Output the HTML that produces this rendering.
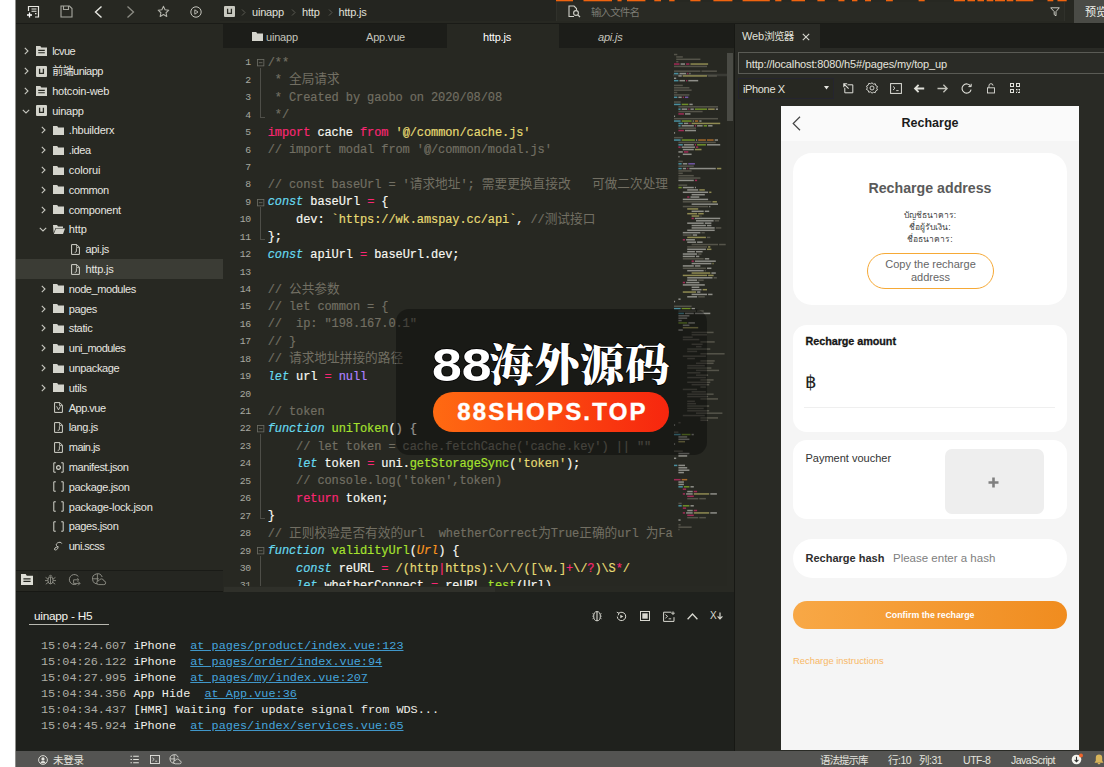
<!DOCTYPE html>
<html lang="zh">
<head>
<meta charset="utf-8">
<title>HBuilderX - uinapp/http/http.js</title>
<style>
*{box-sizing:border-box;margin:0;padding:0}
html,body{width:1104px;height:767px;overflow:hidden;background:#fff}
body{position:relative;font-family:"Liberation Sans","Noto Sans CJK SC",sans-serif;color:#e8e8e2;font-size:11px}
.a{position:absolute}
svg{position:absolute;overflow:visible}
#app{position:absolute;left:0;top:0;width:1104px;height:767px;overflow:hidden}
#bg{left:15px;top:0;width:1089px;height:767px;background:#272822}
#toolbar{left:15px;top:0;width:1089px;height:24px;background:#272822;border-bottom:1px solid #1a1b17}
.ui{font-family:"Liberation Sans","Noto Sans CJK SC",sans-serif;font-size:11px;letter-spacing:-0.2px;white-space:nowrap;line-height:14px}
.row{position:absolute;left:15px;width:208px;height:20px}
.row .t{position:absolute;top:3px;color:#e6e6e0}
#tabbar{left:223px;top:24px;width:511px;height:24px;background:#1c1d19}
#editor{left:223px;top:48px;width:511px;height:539px;background:#272822;overflow:hidden}
.ln{position:absolute;left:0;width:28px;text-align:right;font-family:"Liberation Mono",monospace;font-size:9.8px;color:#a8a8a0;line-height:17.5px;height:17.5px;letter-spacing:-0.2px}
.cl{position:absolute;left:44.7px;font-family:"Liberation Mono","Noto Sans CJK SC",monospace;font-size:12px;letter-spacing:-0.1px;line-height:17.5px;height:17.5px;white-space:pre;color:#f8f8f2;-webkit-text-stroke-width:0.180px}
.cl i{font-style:italic}
.c{color:#726f63}.k{color:#f92672}.s{color:#e6db74}.d{color:#66d9ef;font-style:italic}.f{color:#a6e22e}.p{color:#fd971f;font-style:italic}.n{color:#ae81ff}
.z{font-size:12.7px;letter-spacing:0;line-height:0;-webkit-text-stroke-width:0;font-family:"Noto Sans CJK SC",sans-serif}
#console{left:15px;top:592px;width:719px;height:159px;background:#1f211d}
.log{position:absolute;left:41px;font-family:"Liberation Mono",monospace;font-size:11.85px;line-height:16px;height:16px;white-space:pre;color:#f0f0ea;transform:scaleY(0.900);transform-origin:0 12px}
.log .g{color:#aeaea6}.log u{color:#45a5dd;text-decoration:underline}
#web{left:734px;top:24px;width:370px;height:727px;background:#292a25}
#status{left:15px;top:751px;width:1089px;height:16px;background:#545452}
#status .ui{color:#e4e4de;position:absolute;top:2px}
#phone{left:781px;top:106px;width:298px;height:644px;background:#f5f5f5;overflow:hidden;font-family:"Liberation Sans",sans-serif;color:#333}
.card{position:absolute;left:12px;width:274px;background:#fff}
</style>
</head>
<body>
<div id="app">
<div class="a" id="bg"></div>
<div class="a" id="toolbar"></div>
<svg style="left:0;top:0" width="1104" height="3" viewBox="0 0 1104 3"><rect x="506" y="0" width="28.0" height="1.300" fill="#f0640f"/><rect x="545" y="0" width="28.0" height="1.300" fill="#f0640f"/><rect x="583.5" y="0" width="28.5" height="1.300" fill="#f0640f"/><rect x="617.5" y="0" width="4.1" height="1.300" fill="#f0640f"/><rect x="627" y="0" width="18.4" height="1.300" fill="#f0640f"/><rect x="654.3" y="0" width="6.7" height="1.300" fill="#f0640f"/><rect x="669.2" y="0" width="5.4" height="1.300" fill="#f0640f"/><rect x="690.3" y="0" width="10.2" height="1.300" fill="#f0640f"/><rect x="713.4" y="0" width="19.0" height="1.300" fill="#f0640f"/><rect x="742.6" y="0" width="27.2" height="1.300" fill="#f0640f"/><rect x="775.2" y="0" width="6.2" height="1.300" fill="#f0640f"/><rect x="791.5" y="0" width="13.5" height="1.300" fill="#f0640f"/><rect x="817.4" y="0" width="7.4" height="1.300" fill="#f0640f"/><rect x="838.4" y="0" width="6.1" height="1.300" fill="#f0640f"/><rect x="852" y="0" width="5.4" height="1.300" fill="#f0640f"/><rect x="865" y="0" width="6.0" height="1.300" fill="#f0640f"/><rect x="886" y="0" width="6.8" height="1.300" fill="#f0640f"/><rect x="918.6" y="0" width="6.1" height="1.300" fill="#f0640f"/><rect x="954" y="0" width="11.0" height="1.300" fill="#f0640f"/><rect x="967.5" y="0" width="7.5" height="1.300" fill="#f0640f"/><rect x="977.5" y="0" width="6.5" height="1.300" fill="#f0640f"/><rect x="986.7" y="0" width="6.6" height="1.300" fill="#f0640f"/><rect x="995" y="0" width="10.0" height="1.300" fill="#f0640f"/><rect x="1006.7" y="0" width="6.6" height="1.300" fill="#f0640f"/><rect x="1015.8" y="0" width="17.5" height="1.300" fill="#f0640f"/><rect x="1047.5" y="0" width="5.8" height="1.300" fill="#f0640f"/><rect x="1057.5" y="0" width="9.2" height="1.300" fill="#f0640f"/><rect x="1092.5" y="0" width="7.5" height="1.300" fill="#f0640f"/></svg>
<svg style="left:26px;top:5px" width="14" height="14" viewBox="0 0 14 14"><path d="M2.5 6V1.5h10v10.5H9" stroke="#e8e8e2" stroke-width="1.2" fill="none"/><path d="M5.5 4h5M5.5 6.3h5M9 8.6h1.5" stroke="#e8e8e2" stroke-width="1.1"/><path d="M1 10h5M3.5 7.5v5" stroke="#fff" stroke-width="1.3"/></svg>
<svg style="left:60px;top:5px" width="13" height="13" viewBox="0 0 13 13"><path d="M1 1h8.5L12 3.5V12H1z" stroke="#a8a8a0" stroke-width="1.1" fill="none"/><path d="M3.5 1v3.5h5V1" stroke="#a8a8a0" stroke-width="1.1" fill="none"/></svg>
<svg style="left:94px;top:6px" width="9" height="12" viewBox="0 0 9 12"><path d="M7.5 0.5L1.5 6l6 5.5" stroke="#e8e8e2" stroke-width="1.4" fill="none"/></svg>
<svg style="left:126px;top:6px" width="9" height="12" viewBox="0 0 9 12"><path d="M1.5 0.5L7.5 6l-6 5.5" stroke="#8c8c84" stroke-width="1.3" fill="none"/></svg>
<svg style="left:157px;top:5px" width="13" height="13" viewBox="0 0 24 24"><path d="M12 2.5l2.9 6.3 6.8.8-5 4.7 1.3 6.8L12 17.7 5.9 21.1l1.3-6.8-5-4.7 6.8-.8z" stroke="#b4b4ac" stroke-width="2" fill="none" stroke-linejoin="round"/></svg>
<svg style="left:190px;top:6px" width="12" height="12" viewBox="0 0 12 12"><circle cx="6" cy="6" r="5.2" stroke="#c4c4bc" stroke-width="1" fill="none"/><path d="M4.8 3.8L8 6 4.8 8.2z" stroke="#c4c4bc" stroke-width="0.9" fill="none"/></svg>
<div class="a" style="left:220px;top:0;width:336px;height:21px;background:#242520"></div>
<svg style="left:224px;top:6px" width="11" height="11" viewBox="0 0 11 11"><rect x="0" y="0" width="11" height="11" rx="1" fill="#c8c8c0"/><path d="M3.6 2.8v4.6h3.8V2.8" stroke="#272822" stroke-width="1.3" fill="none"/></svg>
<svg style="left:241px;top:9px" width="5" height="7" viewBox="0 0 5 7"><path d="M1 0.5l3 3-3 3" stroke="#5a5a52" stroke-width="1" fill="none"/></svg>
<svg style="left:291px;top:9px" width="5" height="7" viewBox="0 0 5 7"><path d="M1 0.5l3 3-3 3" stroke="#5a5a52" stroke-width="1" fill="none"/></svg>
<svg style="left:328px;top:9px" width="5" height="7" viewBox="0 0 5 7"><path d="M1 0.5l3 3-3 3" stroke="#5a5a52" stroke-width="1" fill="none"/></svg>
<div class="a ui" style="left:252px;top:5px;color:#e0e0da">uinapp</div>
<div class="a ui" style="left:302px;top:5px;color:#e0e0da">http</div>
<div class="a ui" style="left:338.5px;top:5px;color:#e0e0da">http.js</div>
<div class="a" style="left:556px;top:2px;width:509px;height:19px;background:#292a24;border-left:1px solid #30312b;border-right:1px solid #30312b"></div>
<svg style="left:568px;top:5px" width="13" height="13" viewBox="0 0 13 13"><path d="M6 11.5H1V1h5l2.5 2.5V5" stroke="#d0d0c8" stroke-width="1.1" fill="none"/><circle cx="8" cy="8" r="2.4" stroke="#d0d0c8" stroke-width="1.1" fill="none"/><path d="M9.8 9.8l2.2 2.2" stroke="#d0d0c8" stroke-width="1.2"/></svg>
<div class="a ui" style="left:591px;top:5px;color:#7c7c74;font-size:10.5px;letter-spacing:-0.900px">输入文件名</div>
<svg style="left:1050px;top:7px" width="10" height="10" viewBox="0 0 10 10"><path d="M0.7 0.8h8.6L6 4.6v4.2L4.2 7.6V4.6z" stroke="#c8c8c0" stroke-width="1" fill="none" stroke-linejoin="round"/></svg>
<div class="a" style="left:1074px;top:0;width:30px;height:23px;background:#4a4b46"></div>
<div class="a ui" style="left:1085px;top:5px;color:#f0f0ea;font-size:11px;letter-spacing:0">预览</div>
<div class="row" style="top:41.2px"><svg style="left:8.5px;top:6px" width="5" height="8" viewBox="0 0 5 8"><path d="M0.8 0.8L4 4 0.8 7.2" stroke="#c8c8c0" stroke-width="1.1" fill="none"/></svg><svg style="left:21px;top:5px" width="11" height="10" viewBox="0 0 11 10"><path d="M0 0h4.3l1 1.6H11V10H0z" fill="#d4d4cc"/><path d="M2.2 4.4h6.6M2.2 6.8h6.6" stroke="#272822" stroke-width="1.1"/></svg><span class="t ui" style="left:37.2px;letter-spacing:-0.537px">lcvue</span></div>
<div class="row" style="top:61.0px"><svg style="left:8.5px;top:6px" width="5" height="8" viewBox="0 0 5 8"><path d="M0.8 0.8L4 4 0.8 7.2" stroke="#c8c8c0" stroke-width="1.1" fill="none"/></svg><svg style="left:21px;top:4.5px" width="11" height="11" viewBox="0 0 11 11"><rect width="11" height="11" rx="1" fill="#d4d4cc"/><path d="M3.6 2.8v4.6h3.8V2.8" stroke="#272822" stroke-width="1.3" fill="none"/></svg><span class="t ui" style="left:37.2px;letter-spacing:-0.55px">前端uniapp</span></div>
<div class="row" style="top:80.8px"><svg style="left:8.5px;top:6px" width="5" height="8" viewBox="0 0 5 8"><path d="M0.8 0.8L4 4 0.8 7.2" stroke="#c8c8c0" stroke-width="1.1" fill="none"/></svg><svg style="left:21px;top:5px" width="11" height="10" viewBox="0 0 11 10"><path d="M0 0h4.3l1 1.6H11V10H0z" fill="#d4d4cc"/><path d="M2.2 4.4h6.6M2.2 6.8h6.6" stroke="#272822" stroke-width="1.1"/></svg><span class="t ui" style="left:37.2px;letter-spacing:-0.212px">hotcoin-web</span></div>
<div class="row" style="top:100.6px"><svg style="left:7.0px;top:8px" width="8" height="5" viewBox="0 0 8 5"><path d="M0.8 0.8L4 4 7.2 0.8" stroke="#c8c8c0" stroke-width="1.1" fill="none"/></svg><svg style="left:21px;top:4.5px" width="11" height="11" viewBox="0 0 11 11"><rect width="11" height="11" rx="1" fill="#d4d4cc"/><path d="M3.6 2.8v4.6h3.8V2.8" stroke="#272822" stroke-width="1.3" fill="none"/></svg><span class="t ui" style="left:37.2px;letter-spacing:-0.258px">uinapp</span></div>
<div class="row" style="top:120.4px"><svg style="left:25.5px;top:6px" width="5" height="8" viewBox="0 0 5 8"><path d="M0.8 0.8L4 4 0.8 7.2" stroke="#c8c8c0" stroke-width="1.1" fill="none"/></svg><svg style="left:38px;top:5.5px" width="11" height="9" viewBox="0 0 11 9"><path d="M0 0h4.2l1 1.5H11V9H0z" fill="#d4d4cc"/></svg><span class="t ui" style="left:53.8px;letter-spacing:-0.22px">.hbuilderx</span></div>
<div class="row" style="top:140.2px"><svg style="left:25.5px;top:6px" width="5" height="8" viewBox="0 0 5 8"><path d="M0.8 0.8L4 4 0.8 7.2" stroke="#c8c8c0" stroke-width="1.1" fill="none"/></svg><svg style="left:38px;top:5.5px" width="11" height="9" viewBox="0 0 11 9"><path d="M0 0h4.2l1 1.5H11V9H0z" fill="#d4d4cc"/></svg><span class="t ui" style="left:53.8px;letter-spacing:-0.372px">.idea</span></div>
<div class="row" style="top:160.0px"><svg style="left:25.5px;top:6px" width="5" height="8" viewBox="0 0 5 8"><path d="M0.8 0.8L4 4 0.8 7.2" stroke="#c8c8c0" stroke-width="1.1" fill="none"/></svg><svg style="left:38px;top:5.5px" width="11" height="9" viewBox="0 0 11 9"><path d="M0 0h4.2l1 1.5H11V9H0z" fill="#d4d4cc"/></svg><span class="t ui" style="left:53.8px;letter-spacing:-0.129px">colorui</span></div>
<div class="row" style="top:179.8px"><svg style="left:25.5px;top:6px" width="5" height="8" viewBox="0 0 5 8"><path d="M0.8 0.8L4 4 0.8 7.2" stroke="#c8c8c0" stroke-width="1.1" fill="none"/></svg><svg style="left:38px;top:5.5px" width="11" height="9" viewBox="0 0 11 9"><path d="M0 0h4.2l1 1.5H11V9H0z" fill="#d4d4cc"/></svg><span class="t ui" style="left:53.8px;letter-spacing:-0.365px">common</span></div>
<div class="row" style="top:199.6px"><svg style="left:25.5px;top:6px" width="5" height="8" viewBox="0 0 5 8"><path d="M0.8 0.8L4 4 0.8 7.2" stroke="#c8c8c0" stroke-width="1.1" fill="none"/></svg><svg style="left:38px;top:5.5px" width="11" height="9" viewBox="0 0 11 9"><path d="M0 0h4.2l1 1.5H11V9H0z" fill="#d4d4cc"/></svg><span class="t ui" style="left:53.8px;letter-spacing:-0.271px">component</span></div>
<div class="row" style="top:219.4px"><svg style="left:24.0px;top:8px" width="8" height="5" viewBox="0 0 8 5"><path d="M0.8 0.8L4 4 7.2 0.8" stroke="#c8c8c0" stroke-width="1.1" fill="none"/></svg><svg style="left:38px;top:5.5px" width="12" height="9" viewBox="0 0 12 9"><path d="M0 0h4l1 1.5h5V3H2.6L0.6 8z" fill="#d4d4cc"/><path d="M3 3.6h9L10 9H0.8z" fill="#d4d4cc"/></svg><span class="t ui" style="left:53.8px;letter-spacing:-0.1px">http</span></div>
<div class="row" style="top:239.2px"><svg style="left:55.5px;top:4.5px" width="9" height="11" viewBox="0 0 9 11"><path d="M0.6 0.6h5.2l2.6 2.6v7.2H0.6z" stroke="#d4d4cc" stroke-width="1" fill="none"/><path d="M5.6 0.8v2.8h2.6" stroke="#d4d4cc" stroke-width="0.8" fill="none"/><path d="M5.4 4.2v3q0 1.1-1.1 1.1h-.6" stroke="#d4d4cc" stroke-width="0.9" fill="none"/></svg><span class="t ui" style="left:70.5px;letter-spacing:-0.365px">api.js</span></div>
<div class="row" style="top:259.0px;background:#3b3c35"><svg style="left:55.5px;top:4.5px" width="9" height="11" viewBox="0 0 9 11"><path d="M0.6 0.6h5.2l2.6 2.6v7.2H0.6z" stroke="#d4d4cc" stroke-width="1" fill="none"/><path d="M5.6 0.8v2.8h2.6" stroke="#d4d4cc" stroke-width="0.8" fill="none"/><path d="M5.4 4.2v3q0 1.1-1.1 1.1h-.6" stroke="#d4d4cc" stroke-width="0.9" fill="none"/></svg><span class="t ui" style="left:70.5px;letter-spacing:-0.194px">http.js</span></div>
<div class="row" style="top:278.8px"><svg style="left:25.5px;top:6px" width="5" height="8" viewBox="0 0 5 8"><path d="M0.8 0.8L4 4 0.8 7.2" stroke="#c8c8c0" stroke-width="1.1" fill="none"/></svg><svg style="left:38px;top:5.5px" width="11" height="9" viewBox="0 0 11 9"><path d="M0 0h4.2l1 1.5H11V9H0z" fill="#d4d4cc"/></svg><span class="t ui" style="left:53.8px;letter-spacing:-0.431px">node_modules</span></div>
<div class="row" style="top:298.6px"><svg style="left:25.5px;top:6px" width="5" height="8" viewBox="0 0 5 8"><path d="M0.8 0.8L4 4 0.8 7.2" stroke="#c8c8c0" stroke-width="1.1" fill="none"/></svg><svg style="left:38px;top:5.5px" width="11" height="9" viewBox="0 0 11 9"><path d="M0 0h4.2l1 1.5H11V9H0z" fill="#d4d4cc"/></svg><span class="t ui" style="left:53.8px;letter-spacing:-0.397px">pages</span></div>
<div class="row" style="top:318.4px"><svg style="left:25.5px;top:6px" width="5" height="8" viewBox="0 0 5 8"><path d="M0.8 0.8L4 4 0.8 7.2" stroke="#c8c8c0" stroke-width="1.1" fill="none"/></svg><svg style="left:38px;top:5.5px" width="11" height="9" viewBox="0 0 11 9"><path d="M0 0h4.2l1 1.5H11V9H0z" fill="#d4d4cc"/></svg><span class="t ui" style="left:53.8px;letter-spacing:-0.365px">static</span></div>
<div class="row" style="top:338.2px"><svg style="left:25.5px;top:6px" width="5" height="8" viewBox="0 0 5 8"><path d="M0.8 0.8L4 4 0.8 7.2" stroke="#c8c8c0" stroke-width="1.1" fill="none"/></svg><svg style="left:38px;top:5.5px" width="11" height="9" viewBox="0 0 11 9"><path d="M0 0h4.2l1 1.5H11V9H0z" fill="#d4d4cc"/></svg><span class="t ui" style="left:53.8px;letter-spacing:-0.534px">uni_modules</span></div>
<div class="row" style="top:358.0px"><svg style="left:25.5px;top:6px" width="5" height="8" viewBox="0 0 5 8"><path d="M0.8 0.8L4 4 0.8 7.2" stroke="#c8c8c0" stroke-width="1.1" fill="none"/></svg><svg style="left:38px;top:5.5px" width="11" height="9" viewBox="0 0 11 9"><path d="M0 0h4.2l1 1.5H11V9H0z" fill="#d4d4cc"/></svg><span class="t ui" style="left:53.8px;letter-spacing:-0.37px">unpackage</span></div>
<div class="row" style="top:377.8px"><svg style="left:25.5px;top:6px" width="5" height="8" viewBox="0 0 5 8"><path d="M0.8 0.8L4 4 0.8 7.2" stroke="#c8c8c0" stroke-width="1.1" fill="none"/></svg><svg style="left:38px;top:5.5px" width="11" height="9" viewBox="0 0 11 9"><path d="M0 0h4.2l1 1.5H11V9H0z" fill="#d4d4cc"/></svg><span class="t ui" style="left:53.8px;letter-spacing:-0.352px">utils</span></div>
<div class="row" style="top:397.6px"><svg style="left:38.5px;top:4.5px" width="9" height="11" viewBox="0 0 9 11"><path d="M0.6 0.6h5.2l2.6 2.6v7.2H0.6z" stroke="#d4d4cc" stroke-width="1" fill="none"/><path d="M5.6 0.8v2.8h2.6" stroke="#d4d4cc" stroke-width="0.8" fill="none"/><path d="M2.6 4.3l1.9 3.6 1.9-3.6" stroke="#d4d4cc" stroke-width="0.9" fill="none"/></svg><span class="t ui" style="left:53.8px;letter-spacing:-0.525px">App.vue</span></div>
<div class="row" style="top:417.4px"><svg style="left:38.5px;top:4.5px" width="9" height="11" viewBox="0 0 9 11"><path d="M0.6 0.6h5.2l2.6 2.6v7.2H0.6z" stroke="#d4d4cc" stroke-width="1" fill="none"/><path d="M5.6 0.8v2.8h2.6" stroke="#d4d4cc" stroke-width="0.8" fill="none"/><path d="M5.4 4.2v3q0 1.1-1.1 1.1h-.6" stroke="#d4d4cc" stroke-width="0.9" fill="none"/></svg><span class="t ui" style="left:53.8px;letter-spacing:-0.4px">lang.js</span></div>
<div class="row" style="top:437.2px"><svg style="left:38.5px;top:4.5px" width="9" height="11" viewBox="0 0 9 11"><path d="M0.6 0.6h5.2l2.6 2.6v7.2H0.6z" stroke="#d4d4cc" stroke-width="1" fill="none"/><path d="M5.6 0.8v2.8h2.6" stroke="#d4d4cc" stroke-width="0.8" fill="none"/><path d="M5.4 4.2v3q0 1.1-1.1 1.1h-.6" stroke="#d4d4cc" stroke-width="0.9" fill="none"/></svg><span class="t ui" style="left:53.8px;letter-spacing:-0.549px">main.js</span></div>
<div class="row" style="top:457.0px"><svg style="left:37.7px;top:4.500px" width="11" height="11" viewBox="0 0 11 11"><path d="M2.800 0.800H0.800v9.400h2M8.200 0.800h2v9.400h-2" stroke="#d4d4cc" stroke-width="1" fill="none"/><circle cx="5.500" cy="5.500" r="1.900" stroke="#d4d4cc" stroke-width="1.200" fill="none"/></svg><span class="t ui" style="left:53.8px;letter-spacing:-0.393px">manifest.json</span></div>
<div class="row" style="top:476.8px"><svg style="left:37.7px;top:4.500px" width="11" height="11" viewBox="0 0 11 11"><path d="M2.800 0.800H0.800v9.400h2M8.200 0.800h2v9.400h-2" stroke="#d4d4cc" stroke-width="1" fill="none"/></svg><span class="t ui" style="left:53.8px;letter-spacing:-0.336px">package.json</span></div>
<div class="row" style="top:496.6px"><svg style="left:37.7px;top:4.500px" width="11" height="11" viewBox="0 0 11 11"><path d="M2.800 0.800H0.800v9.400h2M8.200 0.800h2v9.400h-2" stroke="#d4d4cc" stroke-width="1" fill="none"/></svg><span class="t ui" style="left:53.8px;letter-spacing:-0.251px">package-lock.json</span></div>
<div class="row" style="top:516.4px"><svg style="left:37.7px;top:4.500px" width="11" height="11" viewBox="0 0 11 11"><path d="M2.800 0.800H0.800v9.400h2M8.200 0.800h2v9.400h-2" stroke="#d4d4cc" stroke-width="1" fill="none"/></svg><span class="t ui" style="left:53.8px;letter-spacing:-0.362px">pages.json</span></div>
<div class="row" style="top:536.2px"><svg style="left:37.5px;top:4.5px" width="10" height="11" viewBox="0 0 10 11"><path d="M8.8 2.6C8.4 1 6 0.9 4.4 2 2.8 3.1 3 4.4 4.2 5.2 5.6 6.1 5.2 7.6 3.6 8.6 2.4 9.3 1.2 9 1.4 8 1.7 6.8 4 5.6 5.4 5.6" stroke="#d4d4cc" stroke-width="0.9" fill="none"/></svg><span class="t ui" style="left:53.8px;letter-spacing:-0.55px">uni.scss</span></div>
<div class="a" style="left:15px;top:570px;width:208px;height:22px;background:#252621;border-top:1px solid #1a1b17;border-bottom:1px solid #171814"></div>
<div class="a" style="left:15px;top:571px;width:23px;height:20px;background:#272822"></div>
<svg style="left:20.5px;top:573.5px" width="12" height="11" viewBox="0 0 11 10"><path d="M0 0h4.3l1 1.6H11V10H0z" fill="#deded6"/><path d="M2.2 4.4h6.6M2.2 6.8h6.6" stroke="#272822" stroke-width="1.1"/></svg>
<svg style="left:44px;top:573px" width="13" height="13" viewBox="0 0 13 13"><ellipse cx="6.5" cy="7.3" rx="2.6" ry="3.6" stroke="#8e8e86" stroke-width="1" fill="none"/><path d="M5 3.4a1.6 1.6 0 0 1 3 0M6.5 4v6.8M3.9 6L1.6 4.4M9.1 6l2.3-1.6M3.9 7.6H1M9.1 7.6H12M4.1 9.4l-2.3 1.8M8.9 9.4l2.3 1.8" stroke="#8e8e86" stroke-width="0.9" fill="none"/></svg>
<svg style="left:68px;top:573px" width="13" height="13" viewBox="0 0 13 13"><path d="M10.4 3.6A5 5 0 1 0 8.6 11" stroke="#8e8e86" stroke-width="1" fill="none"/><path d="M5.6 6.8h4.4M5.6 6.8v3.6h6.2M10 8.4l2 2-2 2M9.4 5.2l1.4 1.6-1.4 1.4" stroke="#8e8e86" stroke-width="0.9" fill="none"/></svg>
<svg style="left:92px;top:573px" width="14" height="13" viewBox="0 0 14 13"><path d="M6 10.8A5 5 0 1 1 10.2 4" stroke="#8e8e86" stroke-width="1" fill="none"/><path d="M5.4 1.2v9.2M0.8 5.8h6" stroke="#8e8e86" stroke-width="0.9" fill="none"/><path d="M6.6 11.6h5.2a1.8 1.8 0 0 0 .2-3.6 2.6 2.6 0 0 0-5-.4 2 2 0 0 0-.4 4z" stroke="#8e8e86" stroke-width="0.9" fill="#252621"/></svg>
<div class="a" id="tabbar"></div>
<div class="a" style="left:447px;top:24px;width:112px;height:24px;background:#272822"></div>
<svg style="left:252px;top:32px" width="11" height="9" viewBox="0 0 11 9"><path d="M0 0h4.2l1 1.5H11V9H0z" fill="#d4d4cc"/></svg>
<div class="a ui" style="left:266px;top:30px;color:#c4c4bc">uinapp</div>
<div class="a ui" style="left:366px;top:30px;color:#c4c4bc">App.vue</div>
<div class="a ui" style="left:483px;top:30px;color:#ffffff">http.js</div>
<div class="a ui" style="left:598px;top:30px;color:#c4c4bc;font-style:italic">api.js</div>
<div class="a" id="editor">
<div class="ln" style="top:6.36px">1</div>
<div class="cl" style="top:6.96px"><span class="c">/**</span></div>
<div class="ln" style="top:23.79px">2</div>
<div class="cl" style="top:24.39px"><span class="c"> * <span class="z">全局请求</span></span></div>
<div class="ln" style="top:41.23px">3</div>
<div class="cl" style="top:41.83px"><span class="c"> * Created by gaobo on 2020/08/08</span></div>
<div class="ln" style="top:58.66px">4</div>
<div class="cl" style="top:59.26px"><span class="c"> */</span></div>
<div class="ln" style="top:76.10px">5</div>
<div class="cl" style="top:76.7px"><span class="k">import</span> cache <span class="k">from</span> <span class="s">'@/common/cache.js'</span></div>
<div class="ln" style="top:93.53px">6</div>
<div class="cl" style="top:94.13px"><span class="c">// import modal from '@/common/modal.js'</span></div>
<div class="ln" style="top:110.96px">7</div>
<div class="ln" style="top:128.40px">8</div>
<div class="cl" style="top:129.0px"><span class="c">// const baseUrl = '<span class="z">请求地址</span>'; <span class="z">需要更换直接改</span>   <span class="z">可做二次处理</span></span></div>
<div class="ln" style="top:145.83px">9</div>
<div class="cl" style="top:146.43px"><span class="d">const</span> baseUrl <span class="k">=</span> {</div>
<div class="ln" style="top:163.27px">10</div>
<div class="cl" style="top:163.87px">    dev: <span class="s">`https://wk.amspay.cc/api`</span>, <span class="c">//<span class="z">测试接口</span></span></div>
<div class="ln" style="top:180.70px">11</div>
<div class="cl" style="top:181.3px">};</div>
<div class="ln" style="top:198.13px">12</div>
<div class="cl" style="top:198.73px"><span class="d">const</span> apiUrl <span class="k">=</span> baseUrl.dev;</div>
<div class="ln" style="top:215.57px">13</div>
<div class="ln" style="top:233.00px">14</div>
<div class="cl" style="top:233.6px"><span class="c">// <span class="z">公共参数</span></span></div>
<div class="ln" style="top:250.44px">15</div>
<div class="cl" style="top:251.04px"><span class="c">// let common = {</span></div>
<div class="ln" style="top:267.87px">16</div>
<div class="cl" style="top:268.47px"><span class="c">//  ip: "198.167.0.1"</span></div>
<div class="ln" style="top:285.30px">17</div>
<div class="cl" style="top:285.9px"><span class="c">// }</span></div>
<div class="ln" style="top:302.74px">18</div>
<div class="cl" style="top:303.34px"><span class="c">// <span class="z">请求地址拼接的路径</span></span></div>
<div class="ln" style="top:320.17px">19</div>
<div class="cl" style="top:320.77px"><span class="d">let</span> url <span class="k">=</span> <span class="n">null</span></div>
<div class="ln" style="top:337.61px">20</div>
<div class="ln" style="top:355.04px">21</div>
<div class="cl" style="top:355.64px"><span class="c">// token</span></div>
<div class="ln" style="top:372.47px">22</div>
<div class="cl" style="top:373.07px"><span class="d">function</span> <span class="f">uniToken</span>() {</div>
<div class="ln" style="top:389.91px">23</div>
<div class="cl" style="top:390.51px">    <span class="c">// let token = cache.fetchCache('cache.key') || ""</span></div>
<div class="ln" style="top:407.34px">24</div>
<div class="cl" style="top:407.94px">    <span class="d">let</span> token <span class="k">=</span> uni.<span class="f">getStorageSync</span>(<span class="s">'token'</span>);</div>
<div class="ln" style="top:424.78px">25</div>
<div class="cl" style="top:425.38px">    <span class="c">// console.log('token',token)</span></div>
<div class="ln" style="top:442.21px">26</div>
<div class="cl" style="top:442.81px">    <span class="k">return</span> token;</div>
<div class="ln" style="top:459.64px">27</div>
<div class="cl" style="top:460.24px">}</div>
<div class="ln" style="top:477.08px">28</div>
<div class="cl" style="top:477.68px"><span class="c">// <span class="z">正则校验是否有效的</span>url  whetherCorrect<span class="z">为</span>True<span class="z">正确的</span>url <span class="z">为</span>Fa,</span></div>
<div class="ln" style="top:494.51px">29</div>
<div class="cl" style="top:495.11px"><span class="d">function</span> <span class="f">validityUrl</span>(<span class="p">Url</span>) {</div>
<div class="ln" style="top:511.95px">30</div>
<div class="cl" style="top:512.55px">    <span class="d">const</span> reURL <span class="k">=</span> <span class="s">/(http</span><span class="k">|</span><span class="s">https):\/\/([\w.]</span><span class="k">+</span><span class="s">\/</span><span class="k">?</span><span class="s">)\S</span><span class="k">*</span><span class="s">/</span></div>
<div class="ln" style="top:529.38px">31</div>
<div class="cl" style="top:529.98px">    <span class="d">let</span> whetherConnect <span class="k">=</span> reURL.<span class="f">test</span>(Url)</div>
<div class="a" style="left:37px;top:19.7px;width:5px;height:50.3px;border-left:1px solid #4e4e48;border-bottom:1px solid #4e4e48"></div>
<div class="a" style="left:37px;top:159.2px;width:5px;height:32.9px;border-left:1px solid #4e4e48;border-bottom:1px solid #4e4e48"></div>
<div class="a" style="left:37px;top:385.8px;width:5px;height:85.2px;border-left:1px solid #4e4e48;border-bottom:1px solid #4e4e48"></div>
<div class="a" style="left:37px;top:507.9px;width:5px;height:50.3px;border-left:1px solid #4e4e48;border-bottom:1px solid #4e4e48"></div>
<svg style="left:33.800px;top:11.31px" width="7.400" height="7.400" viewBox="0 0 7 7"><rect x="0.5" y="0.5" width="6" height="6" stroke="#6c6c64" fill="#272822" stroke-width="0.8"/><path d="M1.8 3.5h3.4" stroke="#6c6c64" stroke-width="0.8"/></svg>
<svg style="left:33.800px;top:150.78px" width="7.400" height="7.400" viewBox="0 0 7 7"><rect x="0.5" y="0.5" width="6" height="6" stroke="#6c6c64" fill="#272822" stroke-width="0.8"/><path d="M1.8 3.5h3.4" stroke="#6c6c64" stroke-width="0.8"/></svg>
<svg style="left:33.800px;top:377.42px" width="7.400" height="7.400" viewBox="0 0 7 7"><rect x="0.5" y="0.5" width="6" height="6" stroke="#6c6c64" fill="#272822" stroke-width="0.8"/><path d="M1.8 3.5h3.4" stroke="#6c6c64" stroke-width="0.8"/></svg>
<svg style="left:33.800px;top:499.46px" width="7.400" height="7.400" viewBox="0 0 7 7"><rect x="0.5" y="0.5" width="6" height="6" stroke="#6c6c64" fill="#272822" stroke-width="0.8"/><path d="M1.8 3.5h3.4" stroke="#6c6c64" stroke-width="0.8"/></svg>
</div>
<div class="a" style="left:673px;top:49px;width:54px;height:538px;background:#272822"></div>
<div class="a" style="left:727px;top:49px;width:7px;height:538px;background:#282923"></div>
<div class="a" style="left:727px;top:53px;width:6px;height:68px;background:#4a4b45"></div>
<svg style="left:673px;top:49px" width="54" height="538" viewBox="0 0 54 538"><rect x="0" y="24.7" width="54" height="2.6" fill="#3a3b35"/><rect x="1.0" y="4.80" width="3.3" height="1.5" fill="#55544a"/><rect x="3.2" y="7.17" width="6.6" height="1.5" fill="#55544a"/><rect x="3.2" y="9.55" width="24.2" height="1.5" fill="#55544a"/><rect x="3.2" y="11.92" width="2.2" height="1.5" fill="#55544a"/><rect x="1.0" y="14.30" width="5.5" height="1.5" fill="#a02a55"/><rect x="7.6" y="14.30" width="4.4" height="1.5" fill="#8e8e88"/><rect x="13.1" y="14.30" width="3.3" height="1.5" fill="#a02a55"/><rect x="17.5" y="14.30" width="17.6" height="1.5" fill="#8f8a52"/><rect x="1.0" y="16.67" width="33.0" height="1.5" fill="#55544a"/><rect x="1.0" y="21.42" width="26.4" height="1.5" fill="#55544a"/><rect x="28.5" y="21.42" width="15.4" height="1.5" fill="#55544a"/><rect x="1.0" y="23.80" width="4.4" height="1.5" fill="#4a8f9f"/><rect x="6.5" y="23.80" width="6.6" height="1.5" fill="#8e8e88"/><rect x="14.2" y="23.80" width="1.1" height="1.5" fill="#a02a55"/><rect x="16.4" y="23.80" width="1.1" height="1.5" fill="#8e8e88"/><rect x="5.4" y="26.17" width="3.3" height="1.5" fill="#8e8e88"/><rect x="9.8" y="26.17" width="24.2" height="1.5" fill="#8f8a52"/><rect x="35.1" y="26.17" width="8.8" height="1.5" fill="#55544a"/><rect x="1.0" y="28.55" width="2.2" height="1.5" fill="#8e8e88"/><rect x="1.0" y="30.92" width="4.4" height="1.5" fill="#4a8f9f"/><rect x="6.5" y="30.92" width="5.5" height="1.5" fill="#8e8e88"/><rect x="13.1" y="30.92" width="1.1" height="1.5" fill="#a02a55"/><rect x="15.3" y="30.92" width="9.9" height="1.5" fill="#8e8e88"/><rect x="1.0" y="35.67" width="8.8" height="1.5" fill="#55544a"/><rect x="1.0" y="38.05" width="15.4" height="1.5" fill="#55544a"/><rect x="1.0" y="40.42" width="17.6" height="1.5" fill="#55544a"/><rect x="1.0" y="42.80" width="3.3" height="1.5" fill="#55544a"/><rect x="1.0" y="45.17" width="15.4" height="1.5" fill="#55544a"/><rect x="1.0" y="47.55" width="3.3" height="1.5" fill="#4a8f9f"/><rect x="5.4" y="47.55" width="3.3" height="1.5" fill="#8e8e88"/><rect x="9.8" y="47.55" width="1.1" height="1.5" fill="#a02a55"/><rect x="12.0" y="47.55" width="3.3" height="1.5" fill="#7358a5"/><rect x="1.0" y="52.30" width="6.6" height="1.5" fill="#55544a"/><rect x="1.0" y="54.67" width="6.6" height="1.5" fill="#4a8f9f"/><rect x="8.7" y="54.67" width="6.6" height="1.5" fill="#6f8f2a"/><rect x="16.4" y="54.67" width="3.3" height="1.5" fill="#8e8e88"/><rect x="5.4" y="57.05" width="39.6" height="1.5" fill="#55544a"/><rect x="5.4" y="59.42" width="2.2" height="1.5" fill="#4a8f9f"/><rect x="8.7" y="59.42" width="5.5" height="1.5" fill="#8e8e88"/><rect x="15.3" y="59.42" width="1.1" height="1.5" fill="#a02a55"/><rect x="17.5" y="59.42" width="3.3" height="1.5" fill="#8e8e88"/><rect x="21.9" y="59.42" width="12.1" height="1.5" fill="#6f8f2a"/><rect x="35.1" y="59.42" width="6.6" height="1.5" fill="#8f8a52"/><rect x="42.8" y="59.42" width="2.2" height="1.5" fill="#8e8e88"/><rect x="5.4" y="61.80" width="24.2" height="1.5" fill="#55544a"/><rect x="5.4" y="64.17" width="5.5" height="1.5" fill="#a02a55"/><rect x="12.0" y="64.17" width="5.5" height="1.5" fill="#8e8e88"/><rect x="1.0" y="66.55" width="1.1" height="1.5" fill="#8e8e88"/><rect x="1.0" y="68.92" width="44.0" height="1.5" fill="#55544a"/><rect x="1.0" y="71.30" width="6.6" height="1.5" fill="#4a8f9f"/><rect x="8.7" y="71.30" width="9.9" height="1.5" fill="#6f8f2a"/><rect x="19.7" y="71.30" width="1.1" height="1.5" fill="#8e8e88"/><rect x="21.9" y="71.30" width="3.3" height="1.5" fill="#a5682a"/><rect x="26.3" y="71.30" width="2.2" height="1.5" fill="#8e8e88"/><rect x="5.4" y="73.67" width="4.4" height="1.5" fill="#4a8f9f"/><rect x="10.9" y="73.67" width="4.4" height="1.5" fill="#8e8e88"/><rect x="16.4" y="73.67" width="1.1" height="1.5" fill="#a02a55"/><rect x="18.6" y="73.67" width="28.6" height="1.5" fill="#8f8a52"/><rect x="5.4" y="76.05" width="2.2" height="1.5" fill="#4a8f9f"/><rect x="8.7" y="76.05" width="12.1" height="1.5" fill="#8e8e88"/><rect x="21.9" y="76.05" width="1.1" height="1.5" fill="#a02a55"/><rect x="24.1" y="76.05" width="5.5" height="1.5" fill="#8e8e88"/><rect x="30.7" y="76.05" width="3.3" height="1.5" fill="#6f8f2a"/><rect x="35.1" y="76.05" width="4.4" height="1.5" fill="#8e8e88"/><rect x="5.4" y="78.42" width="17.6" height="1.5" fill="#55544a"/><rect x="5.4" y="80.80" width="5.5" height="1.5" fill="#a02a55"/><rect x="12.0" y="80.80" width="11.0" height="1.5" fill="#8e8e88"/><rect x="1.0" y="83.18" width="1.1" height="1.5" fill="#8e8e88"/><rect x="1.0" y="87.93" width="8.8" height="1.5" fill="#55544a"/><rect x="1.0" y="90.30" width="6.6" height="1.5" fill="#4a8f9f"/><rect x="8.7" y="90.30" width="13.2" height="1.5" fill="#6f8f2a"/><rect x="23.0" y="90.30" width="1.1" height="1.5" fill="#8e8e88"/><rect x="25.2" y="90.30" width="7.7" height="1.5" fill="#a5682a"/><rect x="34.0" y="90.30" width="6.6" height="1.5" fill="#a5682a"/><rect x="41.7" y="90.30" width="3.3" height="1.5" fill="#8e8e88"/><rect x="5.4" y="92.68" width="37.4" height="1.5" fill="#55544a"/><rect x="5.4" y="95.05" width="4.4" height="1.5" fill="#4a8f9f"/><rect x="10.9" y="95.05" width="9.9" height="1.5" fill="#8e8e88"/><rect x="21.9" y="95.05" width="1.1" height="1.5" fill="#a02a55"/><rect x="24.1" y="95.05" width="8.8" height="1.5" fill="#6f8f2a"/><rect x="34.0" y="95.05" width="13.2" height="1.5" fill="#8e8e88"/><rect x="5.4" y="97.43" width="2.2" height="1.5" fill="#a02a55"/><rect x="8.7" y="97.43" width="13.2" height="1.5" fill="#8e8e88"/><rect x="23.0" y="97.43" width="2.2" height="1.5" fill="#a02a55"/><rect x="9.8" y="99.80" width="11.0" height="1.5" fill="#8e8e88"/><rect x="21.9" y="99.80" width="6.6" height="1.5" fill="#8f8a52"/><rect x="5.4" y="102.18" width="4.4" height="1.5" fill="#8e8e88"/><rect x="10.9" y="102.18" width="4.4" height="1.5" fill="#a02a55"/><rect x="9.8" y="104.55" width="8.8" height="1.5" fill="#8e8e88"/><rect x="5.4" y="106.93" width="1.1" height="1.5" fill="#8e8e88"/><rect x="5.4" y="111.68" width="4.4" height="1.5" fill="#55544a"/><rect x="5.4" y="114.05" width="3.3" height="1.5" fill="#4a8f9f"/><rect x="9.8" y="114.05" width="4.4" height="1.5" fill="#8e8e88"/><rect x="15.3" y="114.05" width="6.6" height="1.5" fill="#7358a5"/><rect x="5.4" y="116.43" width="15.4" height="1.5" fill="#55544a"/><rect x="5.4" y="118.80" width="3.3" height="1.5" fill="#4a8f9f"/><rect x="9.8" y="118.80" width="3.3" height="1.5" fill="#8e8e88"/><rect x="14.2" y="118.80" width="1.1" height="1.5" fill="#a02a55"/><rect x="16.4" y="118.80" width="26.4" height="1.5" fill="#8e8e88"/><rect x="43.9" y="118.80" width="4.4" height="1.5" fill="#8f8a52"/><rect x="5.4" y="121.18" width="13.2" height="1.5" fill="#55544a"/><rect x="5.4" y="123.55" width="4.4" height="1.5" fill="#55544a"/><rect x="5.4" y="125.93" width="15.4" height="1.5" fill="#55544a"/><rect x="5.4" y="128.30" width="22.0" height="1.5" fill="#55544a"/><rect x="5.4" y="130.68" width="15.4" height="1.5" fill="#8e8e88"/><rect x="21.9" y="130.68" width="2.2" height="1.5" fill="#a02a55"/><rect x="5.4" y="135.43" width="8.8" height="1.5" fill="#55544a"/><rect x="5.4" y="137.80" width="3.3" height="1.5" fill="#6f8f2a"/><rect x="9.8" y="137.80" width="11.0" height="1.5" fill="#8e8e88"/><rect x="21.9" y="137.80" width="1.1" height="1.5" fill="#8e8e88"/><rect x="14.2" y="140.18" width="11.0" height="1.5" fill="#8e8e88"/><rect x="26.3" y="140.18" width="5.5" height="1.5" fill="#8f8a52"/><rect x="9.8" y="142.55" width="25.3" height="1.5" fill="#8e8e88"/><rect x="36.2" y="142.55" width="2.2" height="1.5" fill="#8f8a52"/><rect x="18.6" y="144.93" width="13.2" height="1.5" fill="#8e8e88"/><rect x="14.2" y="147.30" width="2.2" height="1.5" fill="#a02a55"/><rect x="17.5" y="147.30" width="8.8" height="1.5" fill="#8e8e88"/><rect x="9.8" y="149.68" width="25.3" height="1.5" fill="#8e8e88"/><rect x="9.8" y="152.05" width="28.6" height="1.5" fill="#55544a"/><rect x="39.5" y="152.05" width="4.4" height="1.5" fill="#8f8a52"/><rect x="18.6" y="154.43" width="26.4" height="1.5" fill="#8e8e88"/><rect x="9.8" y="156.80" width="25.3" height="1.5" fill="#55544a"/><rect x="36.2" y="156.80" width="1.1" height="1.5" fill="#8e8e88"/><rect x="14.2" y="159.18" width="11.0" height="1.5" fill="#8f8a52"/><rect x="18.6" y="161.55" width="12.1" height="1.5" fill="#8e8e88"/><rect x="31.8" y="161.55" width="4.4" height="1.5" fill="#8e8e88"/><rect x="14.2" y="163.93" width="9.9" height="1.5" fill="#8f8a52"/><rect x="25.2" y="163.93" width="5.5" height="1.5" fill="#8f8a52"/><rect x="18.6" y="166.30" width="7.7" height="1.5" fill="#8f8a52"/><rect x="27.4" y="166.30" width="1.1" height="1.5" fill="#55544a"/><rect x="18.6" y="168.68" width="2.2" height="1.5" fill="#a02a55"/><rect x="21.9" y="168.68" width="25.3" height="1.5" fill="#8e8e88"/><rect x="23.0" y="171.05" width="17.6" height="1.5" fill="#8e8e88"/><rect x="41.7" y="171.05" width="4.4" height="1.5" fill="#55544a"/><rect x="14.2" y="173.43" width="16.5" height="1.5" fill="#8e8e88"/><rect x="31.8" y="173.43" width="6.6" height="1.5" fill="#8e8e88"/><rect x="18.6" y="175.80" width="14.3" height="1.5" fill="#8e8e88"/><rect x="34.0" y="175.80" width="4.4" height="1.5" fill="#8e8e88"/><rect x="18.6" y="178.18" width="23.1" height="1.5" fill="#8e8e88"/><rect x="42.8" y="178.18" width="5.5" height="1.5" fill="#55544a"/><rect x="14.2" y="180.55" width="27.5" height="1.5" fill="#8e8e88"/><rect x="9.8" y="182.93" width="17.6" height="1.5" fill="#8e8e88"/><rect x="28.5" y="182.93" width="3.3" height="1.5" fill="#55544a"/><rect x="9.8" y="185.30" width="8.8" height="1.5" fill="#55544a"/><rect x="19.7" y="185.30" width="4.4" height="1.5" fill="#8e8e88"/><rect x="14.2" y="187.68" width="18.7" height="1.5" fill="#8f8a52"/><rect x="34.0" y="187.68" width="3.3" height="1.5" fill="#55544a"/><rect x="9.8" y="190.05" width="2.2" height="1.5" fill="#a02a55"/><rect x="13.1" y="190.05" width="8.8" height="1.5" fill="#8e8e88"/><rect x="14.2" y="192.43" width="8.8" height="1.5" fill="#8e8e88"/><rect x="24.1" y="192.43" width="5.5" height="1.5" fill="#8e8e88"/><rect x="18.6" y="194.80" width="26.4" height="1.5" fill="#55544a"/><rect x="46.1" y="194.80" width="6.6" height="1.5" fill="#55544a"/><rect x="14.2" y="197.18" width="19.8" height="1.5" fill="#55544a"/><rect x="35.1" y="197.18" width="2.2" height="1.5" fill="#8f8a52"/><rect x="14.2" y="199.55" width="18.7" height="1.5" fill="#8e8e88"/><rect x="34.0" y="199.55" width="4.4" height="1.5" fill="#8f8a52"/><rect x="14.2" y="201.93" width="7.7" height="1.5" fill="#8e8e88"/><rect x="23.0" y="201.93" width="6.6" height="1.5" fill="#8e8e88"/><rect x="9.8" y="204.30" width="14.3" height="1.5" fill="#8e8e88"/><rect x="25.2" y="204.30" width="3.3" height="1.5" fill="#55544a"/><rect x="9.8" y="206.68" width="12.1" height="1.5" fill="#8e8e88"/><rect x="23.0" y="206.68" width="3.3" height="1.5" fill="#8e8e88"/><rect x="9.8" y="209.05" width="20.9" height="1.5" fill="#55544a"/><rect x="31.8" y="209.05" width="4.4" height="1.5" fill="#8e8e88"/><rect x="18.6" y="211.43" width="2.2" height="1.5" fill="#a02a55"/><rect x="21.9" y="211.43" width="20.9" height="1.5" fill="#8e8e88"/><rect x="18.6" y="213.80" width="19.8" height="1.5" fill="#8e8e88"/><rect x="39.5" y="213.80" width="1.1" height="1.5" fill="#8f8a52"/><rect x="9.8" y="216.18" width="11.0" height="1.5" fill="#8e8e88"/><rect x="21.9" y="216.18" width="5.5" height="1.5" fill="#8e8e88"/><rect x="9.8" y="218.55" width="23.1" height="1.5" fill="#55544a"/><rect x="34.0" y="218.55" width="4.4" height="1.5" fill="#8e8e88"/><rect x="14.2" y="220.93" width="16.5" height="1.5" fill="#8e8e88"/><rect x="31.8" y="220.93" width="1.1" height="1.5" fill="#55544a"/><rect x="18.6" y="223.30" width="18.7" height="1.5" fill="#8f8a52"/><rect x="38.4" y="223.30" width="4.4" height="1.5" fill="#8e8e88"/><rect x="9.8" y="225.68" width="24.2" height="1.5" fill="#8f8a52"/><rect x="35.1" y="225.68" width="5.5" height="1.5" fill="#8f8a52"/><rect x="14.2" y="228.05" width="25.3" height="1.5" fill="#8e8e88"/><rect x="40.6" y="228.05" width="3.3" height="1.5" fill="#55544a"/><rect x="14.2" y="230.43" width="9.9" height="1.5" fill="#8e8e88"/><rect x="25.2" y="230.43" width="5.5" height="1.5" fill="#55544a"/><rect x="9.8" y="232.80" width="2.2" height="1.5" fill="#a02a55"/><rect x="13.1" y="232.80" width="13.2" height="1.5" fill="#8e8e88"/><rect x="9.8" y="235.18" width="22.0" height="1.5" fill="#8e8e88"/><rect x="18.6" y="237.55" width="7.7" height="1.5" fill="#8e8e88"/><rect x="18.6" y="239.93" width="9.9" height="1.5" fill="#8e8e88"/><rect x="29.6" y="239.93" width="4.4" height="1.5" fill="#8f8a52"/><rect x="9.8" y="242.30" width="13.2" height="1.5" fill="#8f8a52"/><rect x="24.1" y="242.30" width="3.3" height="1.5" fill="#8e8e88"/><rect x="18.6" y="244.68" width="15.4" height="1.5" fill="#8e8e88"/><rect x="35.1" y="244.68" width="4.4" height="1.5" fill="#8e8e88"/><rect x="14.2" y="247.05" width="9.9" height="1.5" fill="#8e8e88"/><rect x="25.2" y="247.05" width="6.6" height="1.5" fill="#55544a"/><rect x="5.4" y="249.43" width="2.2" height="1.5" fill="#8e8e88"/><rect x="1.0" y="251.80" width="1.1" height="1.5" fill="#8e8e88"/><rect x="1.0" y="256.55" width="17.6" height="1.5" fill="#55544a"/><rect x="1.0" y="258.93" width="6.6" height="1.5" fill="#4a8f9f"/><rect x="8.7" y="258.93" width="8.8" height="1.5" fill="#6f8f2a"/><rect x="18.6" y="258.93" width="3.3" height="1.5" fill="#8e8e88"/><rect x="5.4" y="261.30" width="17.6" height="1.5" fill="#55544a"/><rect x="24.1" y="261.30" width="6.6" height="1.5" fill="#55544a"/><rect x="5.4" y="263.68" width="5.5" height="1.5" fill="#4a8f9f"/><rect x="12.0" y="263.68" width="8.8" height="1.5" fill="#8e8e88"/><rect x="21.9" y="263.68" width="15.4" height="1.5" fill="#8e8e88"/><rect x="5.4" y="266.05" width="11.0" height="1.5" fill="#8e8e88"/><rect x="5.4" y="268.43" width="8.8" height="1.5" fill="#8e8e88"/><rect x="5.4" y="270.80" width="3.3" height="1.5" fill="#8e8e88"/><rect x="5.4" y="273.18" width="8.8" height="1.5" fill="#6f8f2a"/><rect x="15.3" y="273.18" width="6.6" height="1.5" fill="#8e8e88"/><rect x="9.8" y="275.55" width="6.6" height="1.5" fill="#8e8e88"/><rect x="9.8" y="277.93" width="15.4" height="1.5" fill="#8f8a52"/><rect x="5.4" y="280.30" width="4.4" height="1.5" fill="#8e8e88"/><rect x="18.6" y="282.68" width="22.0" height="1.5" fill="#55544a"/><rect x="18.6" y="285.05" width="15.4" height="1.5" fill="#55544a"/><rect x="9.8" y="287.43" width="9.9" height="1.5" fill="#55544a"/><rect x="9.8" y="289.80" width="16.5" height="1.5" fill="#55544a"/><rect x="27.4" y="292.18" width="14.3" height="1.5" fill="#55544a"/><rect x="18.6" y="294.55" width="11.0" height="1.5" fill="#55544a"/><rect x="23.0" y="296.93" width="5.5" height="1.5" fill="#55544a"/><rect x="14.2" y="299.30" width="23.1" height="1.5" fill="#55544a"/><rect x="14.2" y="301.68" width="9.9" height="1.5" fill="#55544a"/><rect x="27.4" y="304.05" width="24.2" height="1.5" fill="#55544a"/><rect x="9.8" y="306.43" width="23.1" height="1.5" fill="#55544a"/><rect x="14.2" y="308.80" width="7.7" height="1.5" fill="#55544a"/><rect x="27.4" y="311.18" width="14.3" height="1.5" fill="#55544a"/><rect x="23.0" y="313.55" width="17.6" height="1.5" fill="#55544a"/><rect x="14.2" y="315.93" width="17.6" height="1.5" fill="#55544a"/><rect x="14.2" y="318.30" width="24.2" height="1.5" fill="#55544a"/><rect x="23.0" y="320.68" width="23.1" height="1.5" fill="#55544a"/><rect x="14.2" y="323.05" width="13.2" height="1.5" fill="#55544a"/><rect x="23.0" y="325.43" width="12.1" height="1.5" fill="#55544a"/><rect x="14.2" y="327.80" width="18.7" height="1.5" fill="#55544a"/><rect x="27.4" y="330.18" width="13.2" height="1.5" fill="#55544a"/><rect x="14.2" y="332.55" width="23.1" height="1.5" fill="#55544a"/><rect x="18.6" y="334.93" width="17.6" height="1.5" fill="#55544a"/><rect x="27.4" y="337.30" width="5.5" height="1.5" fill="#55544a"/><rect x="9.8" y="339.68" width="14.3" height="1.5" fill="#55544a"/><rect x="18.6" y="342.05" width="14.3" height="1.5" fill="#55544a"/><rect x="14.2" y="344.43" width="26.4" height="1.5" fill="#55544a"/><rect x="14.2" y="346.80" width="20.9" height="1.5" fill="#55544a"/><rect x="27.4" y="349.18" width="17.6" height="1.5" fill="#55544a"/><rect x="14.2" y="351.55" width="7.7" height="1.5" fill="#55544a"/><rect x="14.2" y="353.93" width="8.8" height="1.5" fill="#55544a"/><rect x="14.2" y="356.30" width="22.0" height="1.5" fill="#55544a"/><rect x="14.2" y="358.68" width="16.5" height="1.5" fill="#55544a"/><rect x="14.2" y="361.05" width="22.0" height="1.5" fill="#55544a"/><rect x="23.0" y="363.43" width="26.4" height="1.5" fill="#55544a"/><rect x="9.8" y="365.80" width="22.0" height="1.5" fill="#55544a"/><rect x="27.4" y="368.18" width="17.6" height="1.5" fill="#55544a"/><rect x="27.4" y="370.55" width="7.7" height="1.5" fill="#55544a"/><rect x="5.4" y="372.93" width="2.2" height="1.5" fill="#55544a"/><rect x="1.0" y="375.30" width="1.1" height="1.5" fill="#8e8e88"/><rect x="1.0" y="382.43" width="4.4" height="1.5" fill="#55544a"/><rect x="1.0" y="384.80" width="6.6" height="1.5" fill="#4a8f9f"/><rect x="8.7" y="384.80" width="8.8" height="1.5" fill="#6f8f2a"/><rect x="18.6" y="384.80" width="2.2" height="1.5" fill="#8e8e88"/><rect x="5.4" y="387.18" width="8.8" height="1.5" fill="#8e8e88"/><rect x="5.4" y="389.55" width="11.0" height="1.5" fill="#8e8e88"/><rect x="5.4" y="391.93" width="6.6" height="1.5" fill="#8f8a52"/><rect x="1.0" y="394.30" width="1.1" height="1.5" fill="#8e8e88"/><rect x="1.0" y="401.43" width="8.8" height="1.5" fill="#55544a"/><rect x="5.4" y="403.80" width="11.0" height="1.5" fill="#8e8e88"/><rect x="5.4" y="406.18" width="8.8" height="1.5" fill="#8e8e88"/><rect x="1.0" y="408.55" width="2.2" height="1.5" fill="#8e8e88"/><rect x="1.0" y="415.68" width="3.3" height="1.5" fill="#4a8f9f"/><rect x="5.4" y="415.68" width="6.6" height="1.5" fill="#8e8e88"/><rect x="5.4" y="418.05" width="8.8" height="1.5" fill="#8e8e88"/><rect x="5.4" y="420.43" width="11.0" height="1.5" fill="#8e8e88"/><rect x="5.4" y="422.80" width="5.5" height="1.5" fill="#8e8e88"/><rect x="1.0" y="429.93" width="6.6" height="1.5" fill="#a02a55"/><rect x="8.7" y="429.93" width="5.5" height="1.5" fill="#a5682a"/><rect x="5.4" y="432.30" width="5.5" height="1.5" fill="#8e8e88"/><rect x="5.4" y="434.68" width="5.5" height="1.5" fill="#8e8e88"/><rect x="5.4" y="437.05" width="4.4" height="1.5" fill="#4a8f9f"/><rect x="10.9" y="437.05" width="5.5" height="1.5" fill="#6f8f2a"/><rect x="17.5" y="437.05" width="3.3" height="1.5" fill="#8e8e88"/><rect x="9.8" y="439.43" width="3.3" height="1.5" fill="#a02a55"/><rect x="14.2" y="441.80" width="5.5" height="1.5" fill="#8e8e88"/><rect x="20.8" y="441.80" width="3.3" height="1.5" fill="#a02a55"/><rect x="9.8" y="444.18" width="2.2" height="1.5" fill="#a02a55"/><rect x="13.1" y="444.18" width="6.6" height="1.5" fill="#8e8e88"/><rect x="20.8" y="444.18" width="15.4" height="1.5" fill="#8f8a52"/><rect x="37.3" y="444.18" width="6.6" height="1.5" fill="#8e8e88"/><rect x="14.2" y="446.55" width="6.6" height="1.5" fill="#a02a55"/><rect x="14.2" y="448.93" width="11.0" height="1.5" fill="#55544a"/><rect x="26.3" y="448.93" width="6.6" height="1.5" fill="#55544a"/><rect x="5.4" y="453.68" width="3.3" height="1.5" fill="#55544a"/><rect x="5.4" y="456.05" width="3.3" height="1.5" fill="#4a8f9f"/><rect x="9.8" y="456.05" width="6.6" height="1.5" fill="#6f8f2a"/><rect x="17.5" y="456.05" width="3.3" height="1.5" fill="#8e8e88"/><rect x="9.8" y="458.43" width="3.3" height="1.5" fill="#a02a55"/><rect x="14.2" y="460.80" width="5.5" height="1.5" fill="#8e8e88"/><rect x="20.8" y="460.80" width="3.3" height="1.5" fill="#a02a55"/><rect x="9.8" y="463.17" width="2.2" height="1.5" fill="#a02a55"/><rect x="13.1" y="463.17" width="6.6" height="1.5" fill="#8e8e88"/><rect x="20.8" y="463.17" width="15.4" height="1.5" fill="#8f8a52"/><rect x="37.3" y="463.17" width="6.6" height="1.5" fill="#8e8e88"/><rect x="14.2" y="465.55" width="6.6" height="1.5" fill="#a02a55"/><rect x="14.2" y="467.92" width="11.0" height="1.5" fill="#55544a"/><rect x="26.3" y="467.92" width="6.6" height="1.5" fill="#55544a"/><rect x="5.4" y="470.30" width="2.2" height="1.5" fill="#8e8e88"/><rect x="5.4" y="475.05" width="2.2" height="1.5" fill="#55544a"/><rect x="5.4" y="477.42" width="13.2" height="1.5" fill="#55544a"/><rect x="5.4" y="479.80" width="1.1" height="1.5" fill="#55544a"/></svg>
<div class="a" id="console"></div>
<div class="a" style="left:224px;top:586px;width:510px;height:6px;background:#282923"></div><div class="a" style="left:224px;top:587px;width:271px;height:5px;background:#2f302a"></div>
<div class="a ui" style="left:34px;top:609px;color:#f4f4ee;font-size:11.800px;letter-spacing:-0.250px">uinapp - H5</div>
<div class="a" style="left:29px;top:624px;width:80px;height:1px;background:#b8b8b0"></div>
<div class="log" style="top:638.30px"><span class="g">15:04:24.607</span> iPhone  <u>at pages/product/index.vue:123</u></div>
<div class="log" style="top:654.14px"><span class="g">15:04:26.122</span> iPhone  <u>at pages/order/index.vue:94</u></div>
<div class="log" style="top:669.98px"><span class="g">15:04:27.995</span> iPhone  <u>at pages/my/index.vue:207</u></div>
<div class="log" style="top:685.82px"><span class="g">15:04:34.356</span> App Hide  <u>at App.vue:36</u></div>
<div class="log" style="top:701.66px"><span class="g">15:04:34.437</span> [HMR] Waiting for update signal from WDS...</div>
<div class="log" style="top:717.50px"><span class="g">15:04:45.924</span> iPhone  <u>at pages/index/services.vue:65</u></div>
<svg style="left:592px;top:609.500px" width="10" height="12" viewBox="0 0 10 12"><ellipse cx="5" cy="6.200" rx="3.300" ry="4.600" stroke="#d8d8d0" stroke-width="1" fill="none"/><path d="M5 1.600v9.200" stroke="#d8d8d0" stroke-width="1.100"/><path d="M1.700 4.200L0.500 3.600M1.700 6.200H0.300M1.700 8.200l-1.200.600M8.300 4.200l1.200-.600M8.300 6.200h1.400M8.300 8.200l1.200.600" stroke="#d8d8d0" stroke-width="0.800"/></svg>
<svg style="left:616px;top:610.500px" width="11" height="11" viewBox="0 0 11 11"><path d="M2.600 2.400A4.200 4.200 0 1 1 1.300 5.600" stroke="#d8d8d0" stroke-width="1" fill="none"/><path d="M0.800 1.200l2.200 1-0.800 2.200" stroke="#d8d8d0" stroke-width="0.900" fill="none"/><path d="M4.300 3.700L7.300 5.500 4.300 7.300z" fill="#d8d8d0"/></svg>
<svg style="left:640px;top:611px" width="10" height="10" viewBox="0 0 10 10"><rect x="0.500" y="0.500" width="9" height="9" stroke="#d8d8d0" stroke-width="1" fill="none"/><rect x="2.300" y="2.300" width="5.400" height="5.400" fill="#d8d8d0"/></svg>
<svg style="left:663px;top:610.500px" width="12" height="11" viewBox="0 0 12 11"><path d="M11 6.200v4.200H0.600V1.200h7.800" stroke="#d8d8d0" stroke-width="1" fill="none"/><path d="M2.400 3.600l2.200 1.800-2.200 1.800M5.600 7.800h2.600" stroke="#d8d8d0" stroke-width="0.900" fill="none"/><path d="M10 0.400v3.600M8.200 2.200h3.600" stroke="#d8d8d0" stroke-width="0.900" fill="none"/></svg>
<svg style="left:687px;top:612.500px" width="11" height="7" viewBox="0 0 11 7"><path d="M0.600 6.200L5.500 1l4.900 5.200" stroke="#d8d8d0" stroke-width="1.300" fill="none"/></svg>
<div class="a ui" style="left:710px;top:608.500px;color:#d8d8d0;font-size:10px;letter-spacing:0">X</div>
<svg style="left:717px;top:612px" width="6" height="8" viewBox="0 0 6 8"><path d="M3 0.400v6.400M0.600 4.400L3 6.900l2.400-2.500" stroke="#d8d8d0" stroke-width="1.200" fill="none"/></svg>
<div class="a" id="web"></div>
<div class="a" style="left:734px;top:24px;width:370px;height:24px;background:#1c1d19"></div>
<div class="a" style="left:735px;top:24px;width:85px;height:24px;background:#292a25"></div>
<div class="a" style="left:734px;top:24px;width:1px;height:727px;background:#171814"></div>
<div class="a ui" style="left:742px;top:29px;color:#e0e0da;letter-spacing:-0.100px">Web<span style="font-size:10.500px;letter-spacing:-0.700px">浏览器</span></div>
<svg style="left:802px;top:32.500px" width="8" height="8" viewBox="0 0 8 8"><path d="M0.8 0.8l6.4 6.4M7.2 0.8L0.8 7.2" stroke="#d8d8d0" stroke-width="1.1"/></svg>
<div class="a" style="left:738px;top:52px;width:368px;height:22px;background:#2a2b26;border:1px solid #5a5b55"></div>
<div class="a ui" style="left:745.800px;top:57px;color:#e4e4de;letter-spacing:-0.15px">http://localhost:8080/h5#/pages/my/top_up</div>
<div class="a" style="left:738px;top:78px;width:96px;height:21px;background:#272822;border:1px solid #25252f"></div>
<div class="a ui" style="left:743px;top:82px;color:#e4e4de;letter-spacing:-0.350px">iPhone X</div>
<svg style="left:824px;top:86px" width="5" height="4" viewBox="0 0 5 4"><path d="M0 0h5L2.5 3.6z" fill="#e4e4de"/></svg>
<svg style="left:843px;top:83px" width="11" height="11" viewBox="0 0 11 11"><path d="M4.600 1.800h5.200v8H1.800V4.800" stroke="#e0e0da" stroke-width="1" fill="none"/><path d="M0.800 0.800l4.800 4.800M0.800 4.200V0.800h3.400" stroke="#e0e0da" stroke-width="1.100" fill="none"/></svg>
<svg style="left:866px;top:82px" width="12" height="12" viewBox="0 0 12 12"><path d="M6 0.8l1.4 1.3 1.9-.3.5 1.8 1.7.9-.8 1.7.8 1.7-1.7.9-.5 1.8-1.9-.3L6 11.200l-1.400-1.300-1.900.3-.5-1.800-1.700-.9.800-1.700-.8-1.700 1.700-.9.500-1.800 1.900.3z" stroke="#e0e0da" stroke-width="0.9" fill="none" stroke-linejoin="round"/><circle cx="6" cy="6" r="2" stroke="#e0e0da" stroke-width="0.9" fill="none"/></svg>
<svg style="left:890px;top:83px" width="12" height="11" viewBox="0 0 12 11"><rect x="0.6" y="0.6" width="10.8" height="9.8" stroke="#e0e0da" stroke-width="1" fill="none"/><path d="M3 3.4l2 1.8-2 1.800M6.200 7.600h2.400" stroke="#e0e0da" stroke-width="0.9" fill="none"/></svg>
<svg style="left:914px;top:84px" width="11" height="9" viewBox="0 0 11 9"><path d="M10.200 4.500H1.400M4.600 0.900L1 4.500l3.600 3.600" stroke="#e0e0da" stroke-width="1.800" fill="none"/></svg>
<svg style="left:937px;top:84px" width="11" height="9" viewBox="0 0 11 9"><path d="M0.500 4.500h9.300M6.400 0.800l3.700 3.700-3.700 3.700" stroke="#c4c4bc" stroke-width="1.300" fill="none"/></svg>
<svg style="left:961px;top:83px" width="11" height="11" viewBox="0 0 11 11"><path d="M9.600 3.200A4.600 4.600 0 1 0 10.100 6.600" stroke="#e0e0da" stroke-width="1.100" fill="none"/><path d="M10.200 0.800v2.800H7.400" stroke="#e0e0da" stroke-width="1" fill="none"/></svg>
<svg style="left:987px;top:83px" width="8" height="10.700" viewBox="0 0 9 12"><rect x="0.600" y="5.400" width="7.800" height="5.800" stroke="#e0e0da" stroke-width="1" fill="none"/><path d="M2.200 5.400V3.200a2.300 2.300 0 0 1 4.600-.3" stroke="#e0e0da" stroke-width="1" fill="none"/></svg>
<svg style="left:1010px;top:83px" width="10" height="10" viewBox="0 0 10 10"><rect x="0.500" y="0.500" width="3" height="3" stroke="#e0e0da" stroke-width="1" fill="none"/><rect x="6.500" y="0.500" width="3" height="3" stroke="#e0e0da" stroke-width="1" fill="none"/><rect x="0.500" y="6.500" width="3" height="3" stroke="#e0e0da" stroke-width="1" fill="none"/><path d="M6 6.500h1.500M8.500 6.500H10M6 9.500h1M8 9.500h2M6.500 8h1M9 8h1" stroke="#e0e0da" stroke-width="1"/></svg>
<div class="a" id="phone">
<div class="a" style="left:0;top:0;width:298px;height:35px;background:#fafafa"></div>
<svg style="left:11px;top:10px" width="9" height="15" viewBox="0 0 9 15"><path d="M8 0.800L1.200 7.500 8 14.200" stroke="#444" stroke-width="1.200" fill="none"/></svg>
<div class="a" style="left:0;top:9.5px;width:298px;text-align:center;font-size:12.5px;font-weight:bold;color:#1a1a1a;line-height:15px">Recharge</div>
<div class="card" style="top:47px;height:152px;border-radius:19px"></div>
<div class="a" style="left:0;top:73.500px;width:298px;text-align:center;font-size:14.200px;font-weight:bold;color:#5a5a5a;line-height:17px">Recharge address</div>
<div class="a" style="font-size:8.500px;color:#444;line-height:12px;text-align:center;width:298px;left:0;font-family:'Liberation Sans',sans-serif;top:103px">บัญชีธนาคาร:</div>
<div class="a" style="font-size:8.500px;color:#444;line-height:12px;text-align:center;width:298px;left:0;font-family:'Liberation Sans',sans-serif;top:115px">ชื่อผู้รับเงิน:</div>
<div class="a" style="font-size:8.500px;color:#444;line-height:12px;text-align:center;width:298px;left:0;font-family:'Liberation Sans',sans-serif;top:127px">ชื่อธนาคาร:</div>
<div class="a" style="left:86px;top:147px;width:127px;height:36px;border:1px solid #f6a936;border-radius:18px;background:#fff"></div>
<div class="a" style="left:86px;top:152px;width:127px;text-align:center;font-size:11px;color:#666;line-height:12.500px">Copy the recharge<br>address</div>
<div class="card" style="top:219px;height:107px;border-radius:14px"></div>
<div class="a" style="left:24.500px;top:227.500px;font-size:10.800px;font-weight:bold;color:#161616;line-height:14px;white-space:nowrap;-webkit-text-stroke:0.300px #161616;letter-spacing:-0.050px">Recharge amount</div>
<div class="a" style="left:24px;top:264px;font-size:18px;color:#222;line-height:24px;font-family:'DejaVu Sans','Liberation Sans',sans-serif">฿</div>
<div class="a" style="left:23px;top:301px;width:251px;height:1px;background:#efefef"></div>
<div class="card" style="top:333.500px;height:79.500px;border-radius:14px"></div>
<div class="a" style="left:24.500px;top:344.500px;font-size:11px;color:#333;line-height:14px;white-space:nowrap">Payment voucher</div>
<div class="a" style="left:163.500px;top:343px;width:99px;height:65px;border-radius:7px;background:#eeeeee"></div>
<svg style="left:207px;top:371px" width="11" height="11" viewBox="0 0 11 11"><path d="M5.500 0.500v10M0.500 5.500h10" stroke="#808080" stroke-width="2.600"/></svg>
<div class="card" style="top:433px;height:39px;border-radius:19.500px"></div>
<div class="a" style="left:24.500px;top:445px;font-size:11px;font-weight:bold;color:#2e2e2e;line-height:14px;white-space:nowrap">Recharge hash</div>
<div class="a" style="left:112px;top:445px;font-size:11.500px;color:#808080;line-height:14px;white-space:nowrap">Please enter a hash</div>
<div class="a" style="left:12px;top:495px;width:274px;height:28px;border-radius:14px;background:linear-gradient(90deg,#f8a846,#f08c1f);text-align:center;color:#fff;font-size:8.800px;font-weight:bold;line-height:28px">Confirm the recharge</div>
<div class="a" style="left:12px;top:548.500px;font-size:9.400px;color:#f8b866;line-height:12px;white-space:nowrap">Recharge instructions</div>
</div>
<div class="a" id="status"><div class="a" style="left:1px;top:0;width:1088px;height:16px">
<svg style="left:22px;top:3.500px" width="10" height="10" viewBox="0 0 10 10"><circle cx="5" cy="5" r="4.400" stroke="#e4e4de" stroke-width="0.900" fill="none"/><circle cx="5" cy="3.900" r="1.600" fill="#e4e4de"/><path d="M2.200 8.200a2.900 2.900 0 0 1 5.600 0z" fill="#e4e4de"/></svg>
<div class="ui" style="left:37px;font-size:10.500px;letter-spacing:-0.300px">未登录</div>
<svg style="left:114px;top:4px" width="9" height="9" viewBox="0 0 9 9"><path d="M0.500 1.200h1.400M3.200 1.200h5.600M0.500 4.500h1.400M3.200 4.500h5.600M0.500 7.800h1.400M3.200 7.800h5.600" stroke="#e4e4de" stroke-width="1.100"/></svg>
<svg style="left:134px;top:3.500px" width="10" height="9" viewBox="0 0 10 9"><rect x="0.500" y="0.500" width="9" height="8" stroke="#e4e4de" stroke-width="0.900" fill="none"/><path d="M2.400 2.800l1.800 1.600-1.800 1.600M5.200 6.200h2" stroke="#e4e4de" stroke-width="0.800" fill="none"/></svg>
<svg style="left:153px;top:3px" width="13" height="11" viewBox="0 0 14 13"><path d="M6 10.800A5 5 0 1 1 10.200 4" stroke="#e4e4de" stroke-width="1" fill="none"/><path d="M5.400 1.200v9.200M0.800 5.800h6" stroke="#e4e4de" stroke-width="0.900" fill="none"/><path d="M6.600 11.600h5.200a1.800 1.800 0 0 0 .2-3.600 2.600 2.600 0 0 0-5-.4 2 2 0 0 0-.4 4z" stroke="#e4e4de" stroke-width="0.900" fill="#545452"/></svg>
<div class="ui" style="left:804px;font-size:10.500px;letter-spacing:-1px">语法提示库</div>
<div class="ui" style="left:872px;font-size:10.500px;letter-spacing:-0.500px">行:10</div>
<div class="ui" style="left:903px;font-size:10.500px;letter-spacing:-0.500px">列:31</div>
<div class="ui" style="left:947px;font-size:10.500px;letter-spacing:-0.450px">UTF-8</div>
<div class="ui" style="left:995px;font-size:10.500px;letter-spacing:-0.500px">JavaScript</div>
<svg style="left:1055px;top:2px" width="13" height="12" viewBox="0 0 13 12"><circle cx="5.500" cy="6.500" r="4.800" fill="#f4f4ee"/><path d="M5.500 3.800v4.600M3.600 6.800l1.900 1.900 1.900-1.900" stroke="#333" stroke-width="1.100" fill="none"/><circle cx="10" cy="2.600" r="2" fill="#f0642a"/></svg>
<svg style="left:1078px;top:3px" width="10" height="11" viewBox="0 0 10 11"><path d="M5 0.500a3.200 3.200 0 0 1 3.200 3.200v3l1.300 2H0.500l1.300-2v-3A3.200 3.200 0 0 1 5 0.500z" fill="#d8b45a"/><path d="M3.800 9.600h2.400" stroke="#d8b45a" stroke-width="1.200"/></svg>
</div></div>
<div class="a" style="left:396px;top:309px;width:311px;height:146px;border-radius:13px;background:rgba(8,8,6,0.420)"></div>
<div class="a" style="left:432px;top:332px;width:240px;font-family:'Liberation Sans','Noto Serif CJK SC',serif;font-weight:900;font-size:44.500px;line-height:66px;color:#fff;white-space:nowrap;-webkit-text-stroke:1.500px #000;paint-order:stroke fill;letter-spacing:0.700px"><span style="display:inline-block;font-size:47px;letter-spacing:0;transform:scaleX(1.140);transform-origin:0 50%;margin-right:5px">88</span>海外源码</div>
<div class="a" style="left:433px;top:391.500px;width:236px;height:40px;border-radius:20px;background:linear-gradient(90deg,#ff6a12,#f7260e);text-align:center;font-weight:bold;font-size:24px;letter-spacing:2.200px;color:#fff;line-height:40px;padding-left:3px;-webkit-text-stroke:0.400px #fff">88SHOPS.TOP</div>
<div class="a" style="left:15px;top:0;width:1px;height:767px;background:#8e8e8b"></div>
</div>
</body>
</html>
